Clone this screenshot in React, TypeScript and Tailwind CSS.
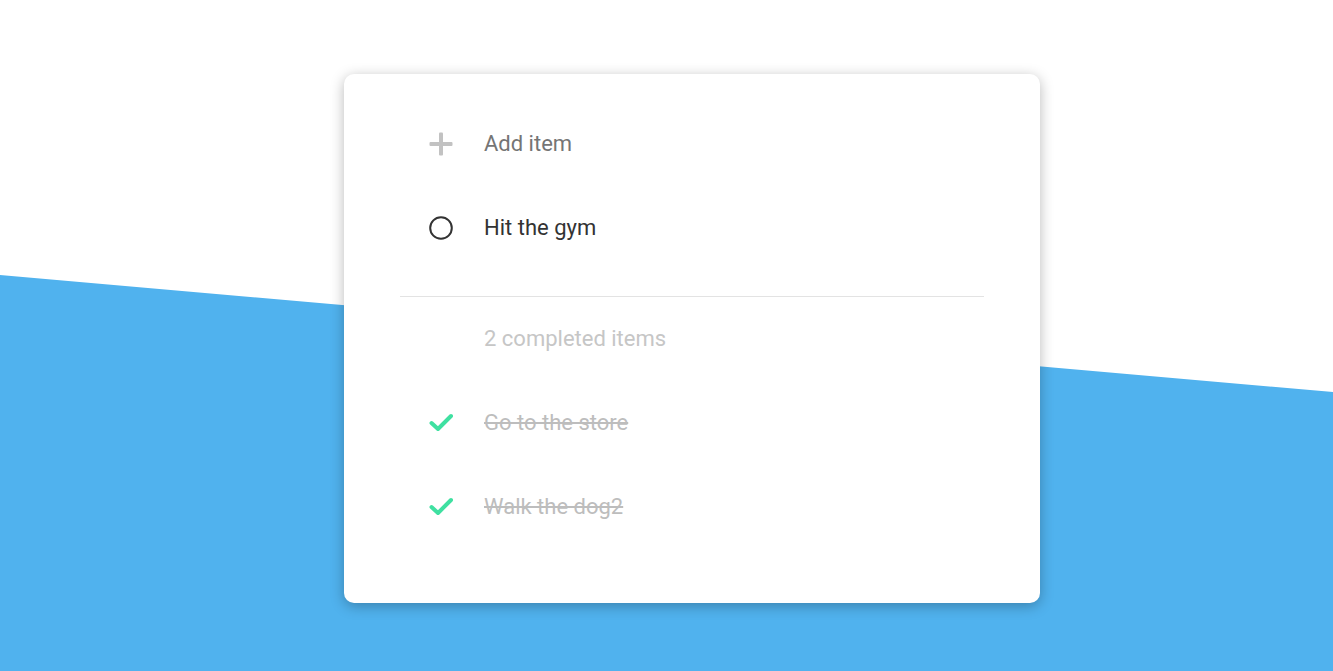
import React from "react";

const font = { fontFamily: "Roboto, 'Liberation Sans', sans-serif" };

function PlusIcon() {
  return (
    <svg width="24" height="24" viewBox="0 0 24 24">
      <rect x="10" y="0.5" width="4" height="23" rx="1" fill="#c2c2c2" />
      <rect x="0.5" y="10" width="23" height="4" rx="1" fill="#c2c2c2" />
    </svg>
  );
}

function CircleIcon() {
  return (
    <svg width="24" height="24" viewBox="0 0 24 24">
      <circle cx="12" cy="12" r="10.8" fill="none" stroke="#333333" strokeWidth="2" />
    </svg>
  );
}

function CheckIcon() {
  return (
    <svg width="24" height="24" viewBox="0 0 24 24">
      <path d="M2.5 12 L9 18 L22 5" fill="none" stroke="#3fe0a1" strokeWidth="4" strokeLinecap="round" strokeLinejoin="round" />
    </svg>
  );
}

function Row({ icon, children }: { icon?: React.ReactNode; children: React.ReactNode }) {
  return (
    <div className="flex h-[84px] items-center pl-[29px]">
      <div className="flex h-6 w-6 items-center justify-center">{icon}</div>
      <div className="ml-[31px] text-[22px] leading-none">{children}</div>
    </div>
  );
}

export default function App() {
  return (
    <div className="relative h-[671px] w-full overflow-hidden bg-white" style={font}>
      <div className="absolute inset-0 bg-[#50b2ee] [clip-path:polygon(0_275px,100%_392px,100%_100%,0_100%)]" />
      <div className="relative ml-[344px] mt-[74px] inline-block w-[696px] rounded-[10px] bg-white px-[56px] pb-[54px] pt-[28px] shadow-[0_3px_14px_rgba(0,0,0,0.28)]">
        <Row icon={<PlusIcon />}>
          <span className="text-[#757575]">Add item</span>
        </Row>
        <Row icon={<CircleIcon />}>
          <span className="text-[#333333]">Hit the gym</span>
        </Row>
        <div className="mt-[26px] h-px bg-[#e3e3e3]" />
        <Row>
          <span className="text-[#c6c6c6]">2 completed items</span>
        </Row>
        <Row icon={<CheckIcon />}>
          <span className="text-[#bdbdbd] line-through decoration-[#bdbdbd]">Go to the store</span>
        </Row>
        <Row icon={<CheckIcon />}>
          <span className="text-[#bdbdbd] line-through decoration-[#bdbdbd]">Walk the dog2</span>
        </Row>
      </div>
    </div>
  );
}
